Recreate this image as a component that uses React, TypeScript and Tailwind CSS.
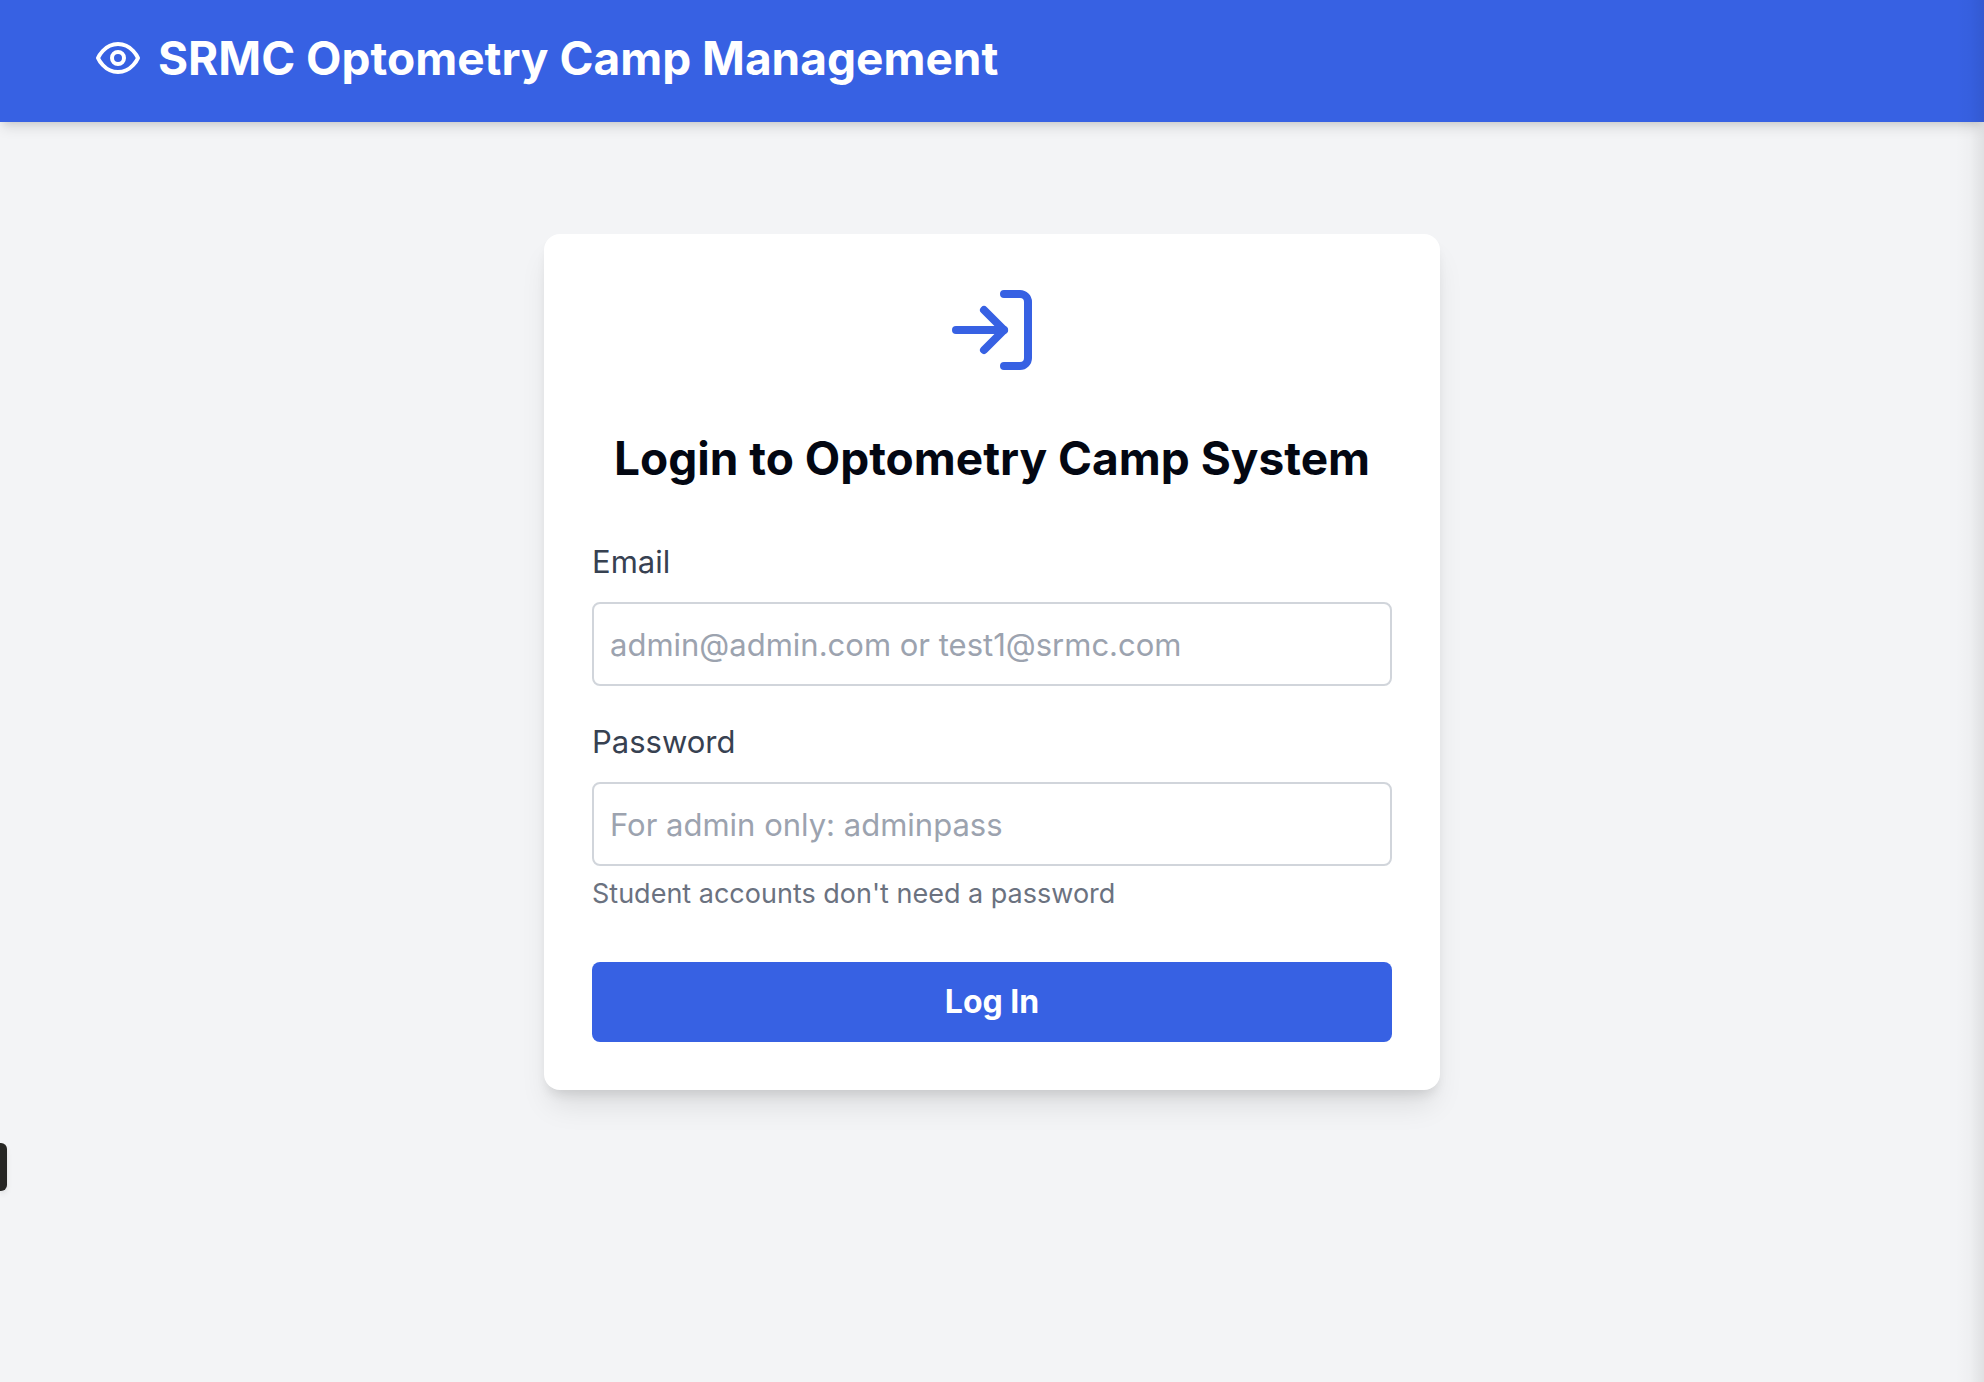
const labelClass = "mb-4 block text-[31px] leading-[48px] text-[#374151]";
const inputClass =
  "block h-[84px] w-full rounded-lg border-2 border-[#d1d5db] bg-white px-4 text-[31px] leading-[48px] text-[#374151] placeholder:text-[#9ca3af] focus:outline-none";

function EyeIcon() {
  return (
    <svg
      className="size-12 shrink-0"
      viewBox="0 0 24 24"
      fill="none"
      stroke="currentColor"
      strokeWidth="2"
      strokeLinecap="round"
      strokeLinejoin="round"
      aria-hidden="true"
    >
      <path d="M2 12s3-7 10-7 10 7 10 7-3 7-10 7-10-7-10-7Z" />
      <circle cx="12" cy="12" r="3" />
    </svg>
  );
}

function LogInIcon() {
  return (
    <svg
      className="mx-auto mb-12 size-24 text-[#3761e3]"
      viewBox="0 0 24 24"
      fill="none"
      stroke="currentColor"
      strokeWidth="2"
      strokeLinecap="round"
      strokeLinejoin="round"
      aria-hidden="true"
    >
      <path d="M15 3h4a2 2 0 0 1 2 2v14a2 2 0 0 1-2 2h-4" />
      <path d="m10 17 5-5-5-5" />
      <path d="M15 12H3" />
    </svg>
  );
}

export default function App() {
  return (
    <div className="relative flex min-h-screen flex-col overflow-hidden bg-[#f3f4f6] font-['Inter',sans-serif]">
      <header className="flex items-center gap-4 bg-[#3761e3] px-[94px] pt-[26px] pb-8 text-white shadow-[0_8px_12px_-2px_rgba(0,0,0,0.1),0_4px_8px_-4px_rgba(0,0,0,0.12)]">
        <EyeIcon />
        <h1 className="text-[46px] leading-[64px] font-bold">SRMC Optometry Camp Management</h1>
      </header>

      <main className="flex justify-center px-8 py-28">
        <section className="w-full max-w-4xl rounded-2xl bg-white p-12 shadow-[0_20px_30px_-6px_rgba(0,0,0,0.1),0_8px_12px_-4px_rgba(0,0,0,0.1)]">
          <LogInIcon />
          <h2 className="mb-12 text-center text-[46px] leading-[64px] font-bold text-[#030712]">
            Login to Optometry Camp System
          </h2>
          <form onSubmit={(event) => event.preventDefault()}>
            <div className="mb-8">
              <label htmlFor="email" className={labelClass}>Email</label>
              <input id="email" type="email" placeholder="admin@admin.com or test1@srmc.com" className={inputClass} />
            </div>
            <div className="mb-12">
              <label htmlFor="password" className={labelClass}>Password</label>
              <input id="password" type="password" placeholder="For admin only: adminpass" className={inputClass} />
              <p className="mt-2 text-[27px] leading-[40px] text-[#6b7280]">Student accounts don't need a password</p>
            </div>
            <button type="submit" className="block w-full rounded-lg bg-[#3761e3] py-4 text-[32px] leading-[48px] font-bold text-white">
              Log In
            </button>
          </form>
        </section>
      </main>

      <div className="pointer-events-none absolute inset-y-0 right-0 w-7 bg-linear-to-l from-black/8 via-black/2 to-transparent" />
      <div className="absolute top-[1143px] left-0 h-12 w-[7px] rounded-r-md bg-[#262624] shadow-md" />
    </div>
  );
}
